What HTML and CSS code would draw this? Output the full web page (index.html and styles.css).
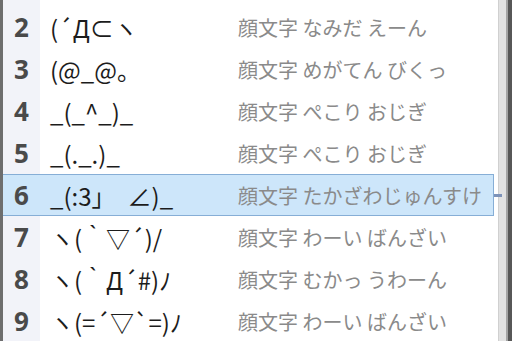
FILE: index.html
```html
<!DOCTYPE html>
<html lang="ja">
<head>
    <meta charset="UTF-8">
    <title>候補ウィンドウ</title>
    <link rel="stylesheet" href="styles.css">
</head>
<body>
    <div class="window">
        <div class="list">
            <div class="row"><span class="num">2</span><span class="face">(´Д⊂ヽ</span><span class="desc">顔文字 なみだ えーん</span></div>
            <div class="row"><span class="num">3</span><span class="face">(@_@。</span><span class="desc">顔文字 めがてん びくっ</span></div>
            <div class="row"><span class="num">4</span><span class="face">_(_^_)_</span><span class="desc">顔文字 ぺこり おじぎ</span></div>
            <div class="row"><span class="num">5</span><span class="face">_(._.)_</span><span class="desc">顔文字 ぺこり おじぎ</span></div>
            <div class="row selected"><span class="num">6</span><span class="face">_(:3」&ensp;∠)_</span><span class="desc">顔文字 たかざわじゅんすけ</span><span class="tick"></span></div>
            <div class="row"><span class="num">7</span><span class="face">ヽ(｀▽´)/</span><span class="desc">顔文字 わーい ばんざい</span></div>
            <div class="row"><span class="num">8</span><span class="face">ヽ(｀Д´#)ﾉ</span><span class="desc">顔文字 むかっ うわーん</span></div>
            <div class="row"><span class="num">9</span><span class="face">ヽ(=´▽`=)ﾉ</span><span class="desc">顔文字 わーい ばんざい</span></div>
        </div>
        <div class="scroll">
            <div class="track"></div>
            <div class="edge"></div>
        </div>
    </div>
</body>
</html>
```

FILE: styles.css
```css
body {
    margin: 0;
    width: 512px;
    height: 341px;
    overflow: hidden;
    background-color: #fff;
    font-family: "Noto Sans CJK JP", "Noto Sans", sans-serif;
}

.window {
    display: flex;
    height: 341px;
    border-left: 3px solid #6e6e6e;
}

.list {
    width: 492px;
    padding-top: 6px;
    background: linear-gradient(to right, #f2f3f9 37px, #fff 37px);
}

.row {
    position: relative;
    display: flex;
    align-items: center;
    height: 42px;
    box-sizing: border-box;
}

.num {
    width: 37px;
    text-align: center;
    font-family: "Open Sans", sans-serif;
    font-weight: bold;
    font-size: 26px;
    color: #4a4a4a;
}

.face {
    width: 188px;
    padding-left: 10px;
    font-size: 24px;
    color: #1c1c1c;
    white-space: nowrap;
}

.desc {
    font-size: 20px;
    color: #8a8a8a;
    white-space: nowrap;
}

.selected {
    background-color: #cde6fa;
    border: 1px solid #86aed6;
    border-left: none;
}

.tick {
    position: absolute;
    right: -9px;
    top: 50%;
    width: 8px;
    height: 3px;
    margin-top: -1px;
    background-color: #7d92b8;
}

.scroll {
    display: flex;
    margin-left: 4px;
}

.track {
    width: 7px;
    background-color: #e2e2e2;
    border-left: 1px solid #d0d0d0;
}

.edge {
    width: 6px;
    background: linear-gradient(to right, #a4a4a4 2px, #575757 2px);
}
```
